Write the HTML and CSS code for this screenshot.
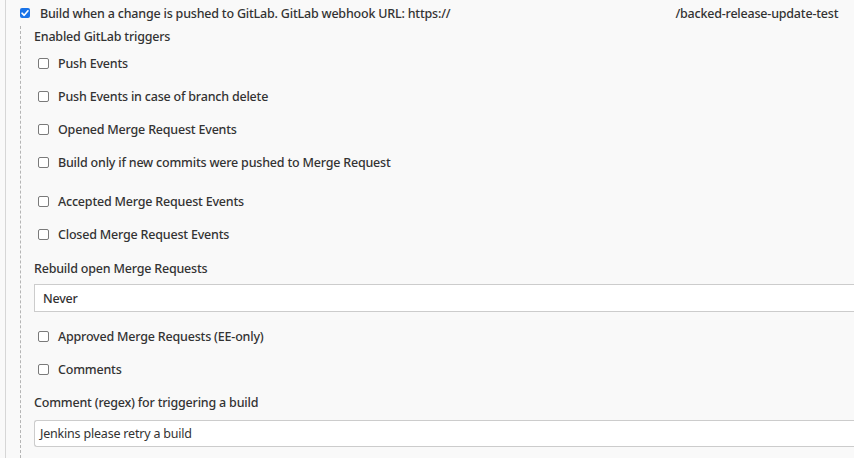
FILE: index.html
```html
<!DOCTYPE html>
<html>
<head>
<meta charset="utf-8">
<link rel="stylesheet" href="styles.css">
</head>
<body>
<div class="panel">
  <label class="top-row">
    <span class="cb checked"><svg viewBox="0 0 10 10" width="10" height="10"><path d="M2 5.2 L4.2 7.3 L8 2.8" fill="none" stroke="#fff" stroke-width="1.6" stroke-linecap="round" stroke-linejoin="round"/></svg></span>
    <span class="top-text">Build when a change is pushed to GitLab. GitLab webhook URL: https://<span class="redacted"></span>/backed-release-update-test</span>
  </label>
  <div class="nested">
    <div class="section-label first">Enabled GitLab triggers</div>
    <label class="opt first-opt"><span class="cb"></span>Push Events</label>
    <label class="opt"><span class="cb"></span>Push Events in case of branch delete</label>
    <label class="opt"><span class="cb"></span>Opened Merge Request Events</label>
    <label class="opt"><span class="cb"></span>Build only if new commits were pushed to Merge Request</label>
    <label class="opt wide"><span class="cb"></span>Accepted Merge Request Events</label>
    <label class="opt"><span class="cb"></span>Closed Merge Request Events</label>
    <div class="section-label rebuild">Rebuild open Merge Requests</div>
    <div class="select">Never</div>
    <label class="opt after-field"><span class="cb"></span>Approved Merge Requests (EE-only)</label>
    <label class="opt"><span class="cb"></span>Comments</label>
    <div class="section-label">Comment (regex) for triggering a build</div>
    <div class="text-input">Jenkins please retry a build</div>
  </div>
</div>
</body>
</html>
```
FILE: styles.css
```css
html, body {
  margin: 0;
  padding: 0;
  background: #f9f9f9;
  overflow: hidden;
}
body {
  font-family: "Noto Sans", "Open Sans", sans-serif;
  font-size: 12.5px;
  font-weight: 500;
  letter-spacing: -0.2px;
  color: #333;
  height: 458px;
}
.panel {
  margin-left: 5px;
  border-left: 1px solid #d6d6d6;
  height: 458px;
  padding-left: 14px;
}
.top-row {
  display: flex;
  align-items: center;
  height: 26px;
  white-space: nowrap;
}
.top-text {
  margin-left: 10px;
}
.redacted {
  display: inline-block;
  width: 225px;
}
.cb {
  display: inline-flex;
  align-items: center;
  justify-content: center;
  width: 9px;
  height: 9px;
  border: 1px solid #7a7a7a;
  border-radius: 2px;
  background: #fff;
  flex: none;
}
.cb.checked {
  background: #1a73e8;
  width: 10px;
  height: 10px;
  border: 0;
}
.nested {
  border-left: 1px dashed #b5b5b5;
  padding-left: 13px;
  height: 432px;
}
.section-label {
  height: 22px;
  line-height: 22px;
  margin-top: 12px;
}
.section-label.first {
  margin-top: 0;
}
.section-label.rebuild {
  margin-top: 13px;
}
.opt {
  display: flex;
  align-items: center;
  height: 22px;
  margin-top: 11px;
  padding-left: 4px;
}
.opt.first-opt {
  margin-top: 4px;
}
.opt .cb {
  margin-right: 9px;
}
.opt.wide {
  margin-top: 17px;
}
.opt.after-field {
  margin-top: 13px;
}
.select {
  margin-top: 4px;
  height: 28px;
  box-sizing: border-box;
  border: 1px solid #ccc;
  border-right: 0;
  background: #fff;
  display: flex;
  align-items: center;
  padding-left: 8px;
}
.text-input {
  margin-top: 6px;
  height: 27px;
  box-sizing: border-box;
  border: 1px solid #ccc;
  border-right: 0;
  border-radius: 3px 0 0 3px;
  background: #fff;
  display: flex;
  align-items: center;
  padding-left: 5px;
  font-weight: 400;
}
```
